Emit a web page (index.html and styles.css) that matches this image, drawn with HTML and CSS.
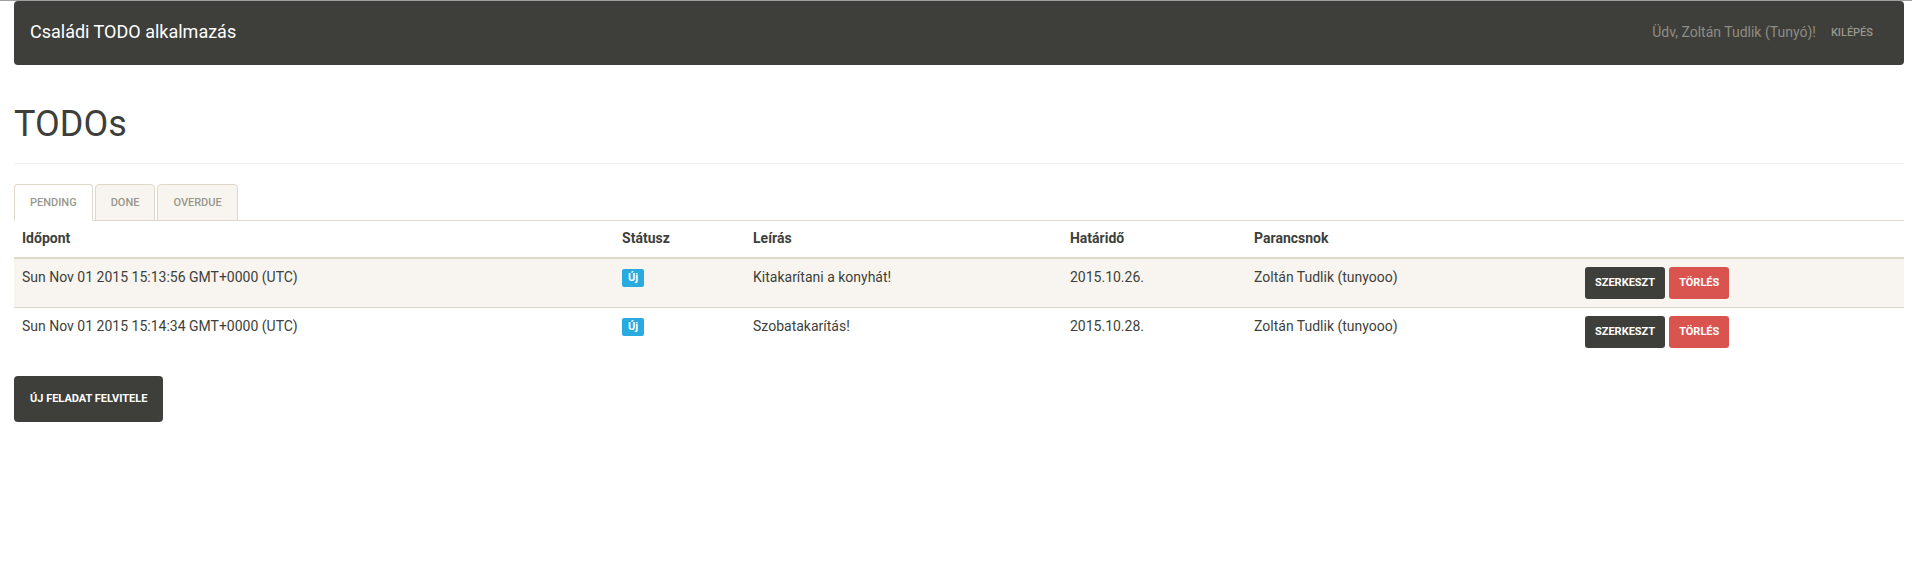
FILE: index.html
```html
<!DOCTYPE html>
<html lang="hu">
<head>
<meta charset="utf-8">
<title>Családi TODO alkalmazás</title>
<link rel="stylesheet" href="styles.css">
</head>
<body>
<div class="page">
  <nav class="navbar">
    <a class="navbar-brand" href="#">Családi TODO alkalmazás</a>
    <div class="navbar-user">
      <span class="navbar-text">Üdv, Zoltán Tudlik (Tunyó)!</span>
      <a class="navbar-link" href="#">Kilépés</a>
    </div>
  </nav>
  <header class="page-header">
    <h1>TODOs</h1>
  </header>
  <ul class="tabs">
    <li><a class="tab tab-active" href="#pending">Pending</a></li>
    <li><a class="tab" href="#done">Done</a></li>
    <li><a class="tab" href="#overdue">Overdue</a></li>
  </ul>
  <table class="table" id="pending">
    <colgroup>
      <col class="col-time">
      <col class="col-status">
      <col class="col-desc">
      <col class="col-due">
      <col class="col-owner">
      <col class="col-actions">
    </colgroup>
    <thead>
      <tr><th>Időpont</th><th>Státusz</th><th>Leírás</th><th>Határidő</th><th>Parancsnok</th><th></th></tr>
    </thead>
    <tbody>
      <tr>
        <td>Sun Nov 01 2015 15:13:56 GMT+0000 (UTC)</td>
        <td><span class="label">Új</span></td>
        <td>Kitakarítani a konyhát!</td>
        <td>2015.10.26.</td>
        <td>Zoltán Tudlik (tunyooo)</td>
        <td><div class="actions"><button class="btn btn-small" type="button">Szerkeszt</button><button class="btn btn-small btn-danger" type="button">Törlés</button></div></td>
      </tr>
      <tr>
        <td>Sun Nov 01 2015 15:14:34 GMT+0000 (UTC)</td>
        <td><span class="label">Új</span></td>
        <td>Szobatakarítás!</td>
        <td>2015.10.28.</td>
        <td>Zoltán Tudlik (tunyooo)</td>
        <td><div class="actions"><button class="btn btn-small" type="button">Szerkeszt</button><button class="btn btn-small btn-danger" type="button">Törlés</button></div></td>
      </tr>
    </tbody>
  </table>
  <button class="btn" type="button">Új feladat felvitele</button>
</div>
</body>
</html>
```
FILE: styles.css
```css
* {
  box-sizing: border-box;
}

body {
  margin: 0;
  border-top: 1px solid #a0a0a0;
  background: #fff;
  color: #3e3f3a;
  font: 14px/20px Roboto, "Liberation Sans", sans-serif;
}

.page {
  padding: 0 8px 0 14px;
}

.navbar {
  display: flex;
  justify-content: space-between;
  padding: 21px 31px 21px 16px;
  border-radius: 4px;
  background: #3e3f3a;
}

.navbar-brand {
  color: #fff;
  font-size: 18px;
  text-decoration: none;
}

.navbar-user {
  display: flex;
  gap: 15px;
}

.navbar-text {
  color: #8e8c84;
}

.navbar-link {
  color: #98978b;
  font-size: 11px;
  font-weight: 500;
  line-height: 22px;
  text-decoration: none;
  text-transform: uppercase;
}

.page-header {
  margin: 40px 0 20px;
  padding-bottom: 19px;
  border-bottom: 1px solid #f0f0f0;
}

h1 {
  margin: 0;
  font-size: 36px;
  font-weight: 400;
  line-height: 39px;
}

.tabs {
  display: flex;
  gap: 2px;
  margin: 0;
  padding: 0;
  border-bottom: 1px solid #dfd7ca;
  list-style: none;
}

.tab {
  display: block;
  margin-bottom: -1px;
  padding: 8px 15px;
  border: 1px solid #dfd7ca;
  border-radius: 4px 4px 0 0;
  background: #f8f5f0;
  color: #98978b;
  font-size: 11px;
  font-weight: 500;
  line-height: 19px;
  text-decoration: none;
  text-transform: uppercase;
}

.tab-active {
  border-bottom-color: #fff;
  background: #fff;
}

.table {
  width: 100%;
  margin-bottom: 20px;
  border-spacing: 0;
  table-layout: fixed;
}

.col-time {
  width: 31.75%;
}

.col-status {
  width: 6.93%;
}

.col-desc {
  width: 16.77%;
}

.col-due {
  width: 9.74%;
}

.col-owner {
  width: 17.51%;
}

th,
td {
  padding: 8px;
  text-align: left;
  vertical-align: top;
}

th {
  padding: 7px 8px 9px;
  border-bottom: 2px solid #dfd7ca;
}

tbody tr:nth-child(odd) {
  background: #f8f5f0;
}

tbody tr + tr td {
  border-top: 1px solid #dfd7ca;
}

.label {
  display: block;
  width: fit-content;
  margin-top: 2px;
  padding: 0 6px;
  border-radius: 2px;
  background: #29abe0;
  color: #fff;
  font-size: 11px;
  font-weight: 700;
  line-height: 18px;
}

.actions {
  display: flex;
  gap: 4px;
}

.btn {
  display: block;
  padding: 12px 16px;
  border: 0;
  border-radius: 4px;
  background: #3e3f3a;
  color: #fff;
  font-family: inherit;
  font-size: 11px;
  font-weight: 700;
  line-height: 22px;
  text-transform: uppercase;
}

.btn-small {
  padding: 5px 10px;
  border-radius: 3px;
}

.btn-danger {
  background: #d9534f;
}
```
